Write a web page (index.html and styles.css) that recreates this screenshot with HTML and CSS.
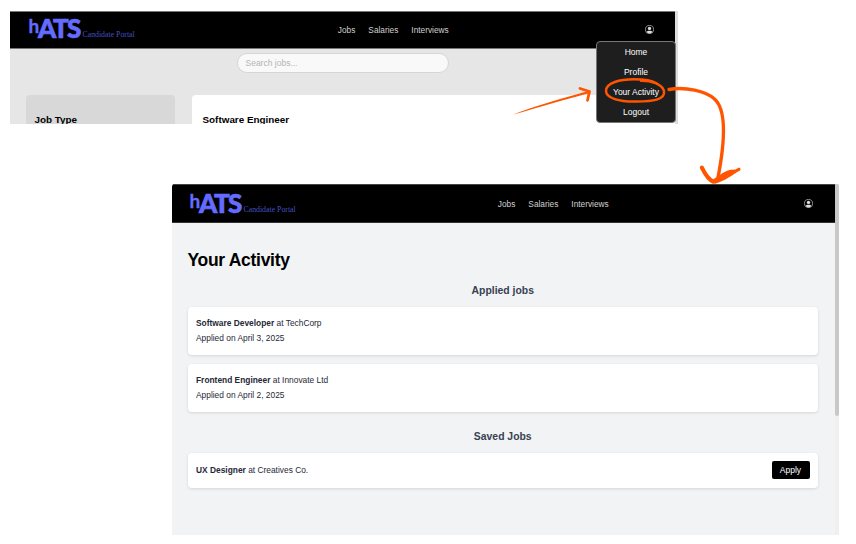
FILE: index.html
```html
<!DOCTYPE html>
<html lang="en">
<head>
<meta charset="utf-8">
<title>hATS Candidate Portal</title>
<link rel="stylesheet" href="styles.css">
</head>
<body>
<main class="board">
  <section class="shot shot-jobs">
    <div class="screen">
      <header class="topbar">
        <div class="brand"><span class="brand-h">h</span><span class="brand-ats">ATS</span><span class="brand-sub">Candidate Portal</span></div>
        <nav class="links"><a>Jobs</a><a>Salaries</a><a>Interviews</a></nav>
        <svg class="user" viewBox="0 0 16 16"><circle cx="8" cy="8" r="7.2" fill="none" stroke="#ccc" stroke-width="1.2"/><circle cx="8" cy="6" r="3" fill="#ddd"/><path d="M2.500 12.500C4 9.500 12 9.500 13.500 12.500Q8 17.500 2.500 12.500Z" fill="#ddd"/></svg>
      </header>
      <div class="search">Search jobs...</div>
      <div class="columns">
        <aside class="filter">Job Type</aside>
        <article class="posting">Software Engineer</article>
      </div>
    </div>
    <div class="track"></div>
    <div class="menu"><a>Home</a><a>Profile</a><a>Your Activity</a><a>Logout</a></div>
  </section>

  <section class="shot shot-activity">
    <div class="screen">
      <header class="topbar">
        <div class="brand"><span class="brand-h">h</span><span class="brand-ats">ATS</span><span class="brand-sub">Candidate Portal</span></div>
        <nav class="links"><a>Jobs</a><a>Salaries</a><a>Interviews</a></nav>
        <svg class="user" viewBox="0 0 16 16"><circle cx="8" cy="8" r="7.2" fill="none" stroke="#ccc" stroke-width="1.2"/><circle cx="8" cy="6" r="3" fill="#ddd"/><path d="M2.500 12.500C4 9.500 12 9.500 13.500 12.500Q8 17.500 2.500 12.500Z" fill="#ddd"/></svg>
      </header>
      <div class="content">
        <h1>Your Activity</h1>
        <h2>Applied jobs</h2>
        <div class="card"><p><b>Software Developer</b> at TechCorp</p><p>Applied on April 3, 2025</p></div>
        <div class="card"><p><b>Frontend Engineer</b> at Innovate Ltd</p><p>Applied on April 2, 2025</p></div>
        <h2 class="saved-title">Saved Jobs</h2>
        <div class="card saved"><p><b>UX Designer</b> at Creatives Co.</p><button class="apply">Apply</button></div>
      </div>
    </div>
    <div class="track"><div class="thumb"></div></div>
  </section>

  <svg class="ink" viewBox="0 0 856 544">
    <g fill="none" stroke="#ff5500" stroke-linecap="round" stroke-linejoin="round">
      <path d="M641 80.800C651 80.500 662 84 664 91C665.500 100 652 101.500 637 101.500C619 102 606 98 606 91C606 82.500 620 79.300 634 79.300C645 79.300 652 80.500 657 83.500" stroke-width="2.500"/>
      <path d="M580 88.500L589.500 91.500L587.500 100.300" stroke-width="2.800"/>
      <path d="M669 89.500C685 86.500 706 91 714.500 99C728 111 723.500 150 717.500 180" stroke-width="3.400"/>
      <path d="M701.800 167.500C704.500 173 709 180 713.500 181.800" stroke-width="4"/>
    </g>
    <path d="M712 180C719 176 725 170.500 731 169.800L735.500 169.500L739 167.500Q741.500 168.500 740 170.500C733 174.500 725 181 715 183.800Z" fill="#ff5500"/>
    <path d="M512.500 114.800C535 106 563 98 588.500 91L589 93.200C564 99.500 540 107 512.500 114.800Z" fill="#ff5500"/>
  </svg>
</main>
</body>
</html>
```

FILE: styles.css
```css
* { box-sizing: border-box; }
body { margin: 0; background: #fff; font-family: "Liberation Sans", Arial, sans-serif; }
h1, h2, p { margin: 0; }
.board { position: relative; width: 856px; height: 544px; overflow: hidden; }
.shot { position: absolute; display: flex; }
.screen { flex: 1; display: flex; flex-direction: column; min-width: 0; overflow: hidden; }
.topbar {
  display: flex;
  justify-content: space-between;
  align-items: center;
  flex: none;
  height: 38px;
  padding: 0 22px 0 18.500px;
  background: #000;
  border-top: 1px solid #777;
  border-bottom: 1px solid #777;
}
.brand { display: flex; align-items: baseline; width: 113px; color: #646cff; height: 29px; line-height: 29px; margin-top: -1px; white-space: nowrap; }
.brand-h { width: 9.500px; font: 700 19px/20px Lato, sans-serif; transform: translateY(-5px); -webkit-text-stroke: .4px #646cff; }
.brand-ats { width: 44.500px; font: 900 26px/29px Lato, sans-serif; letter-spacing: -1.500px; -webkit-text-stroke: .7px #646cff; }
.brand-sub { font: 7.800px/10px "Liberation Serif", serif; color: #4450c4; transform: translateY(-1px); }
.links { display: flex; gap: 13px; font-size: 8.300px; color: #d0d0d0; }
.user { width: 9px; height: 9px; }
.track { width: 4px; background: #f0f0f0; }

.shot-jobs { left: 10px; top: 11px; width: 668px; height: 113px; }
.shot-jobs .screen { background: #e6e6e6; }
.shot-jobs .brand { margin-top: -3px; }
.shot-jobs .links, .shot-jobs .user { margin-top: -1px; }
.shot-jobs .topbar { padding-right: 21px; }
.shot-jobs .track { width: 3px; background: #ddd; }
.search {
  flex: none; align-self: center; width: 212px; height: 20px; margin: 4px 0 22px; padding-left: 8px;
  border: 1px solid #d6d6d6; border-radius: 10px; background: #f9f9f9;
  color: #b4b4b4; font-size: 8.500px; line-height: 18px;
}
.columns { display: flex; flex: 1; gap: 17px; padding-left: 16px; min-height: 0; font-weight: 700; font-size: 9.900px; line-height: 12px; }
.filter { flex: none; width: 149px; padding: 19px 8.500px 0; background: #d8d8d8; border-radius: 4px 4px 0 0; }
.posting { flex: 1; padding: 19px 10.500px 0; background: #fff; border-radius: 4px 0 0; }
.menu {
  position: absolute; left: 586px; top: 30px; width: 80px; height: 82px;
  display: flex; flex-direction: column; align-items: center;
  background: #1e1e1e; border: 1px solid #777; border-radius: 4px;
  color: #fff; font-size: 8.500px; line-height: 20.300px;
}
.menu a:first-child { margin-top: -.5px; }

.shot-activity { left: 171.500px; top: 184px; width: 667.500px; height: 351px; }
.shot-activity .screen { background: #f2f3f5; border-radius: 3px 0 0; }
.shot-activity .topbar { height: 39px; padding-left: 18px; border-top-color: #444; border-bottom-color: #333; }
.content { display: flex; flex-direction: column; padding: 24px 17px 0 16px; }
h1 { font-size: 17.500px; line-height: 26px; letter-spacing: -.3px; color: #000; }
h2 { margin: 11px 0 10px; text-align: center; font-size: 10.400px; line-height: 13px; color: #374151; }
.card {
  height: 48px; margin-bottom: 9px; padding: 9px 8.500px; background: #fff; border-radius: 4px;
  box-shadow: 0 1px 3px rgba(0, 0, 0, .12); color: #1f2937; font-size: 8.400px; line-height: 15px;
}
.saved-title { margin-top: 9px; }
.saved { display: flex; align-items: center; justify-content: space-between; height: 35px; }
.apply { width: 38px; height: 18px; padding: 0; border: 0; border-radius: 2px; background: #000; color: #fff; font: 8.500px "Liberation Sans", sans-serif; }
.saved .apply { margin-top: -1px; }
.thumb { height: 232px; background: #c8c8c8; border-radius: 0 2px 2px; }
.ink { position: absolute; inset: 0; width: 856px; height: 544px; }
```
